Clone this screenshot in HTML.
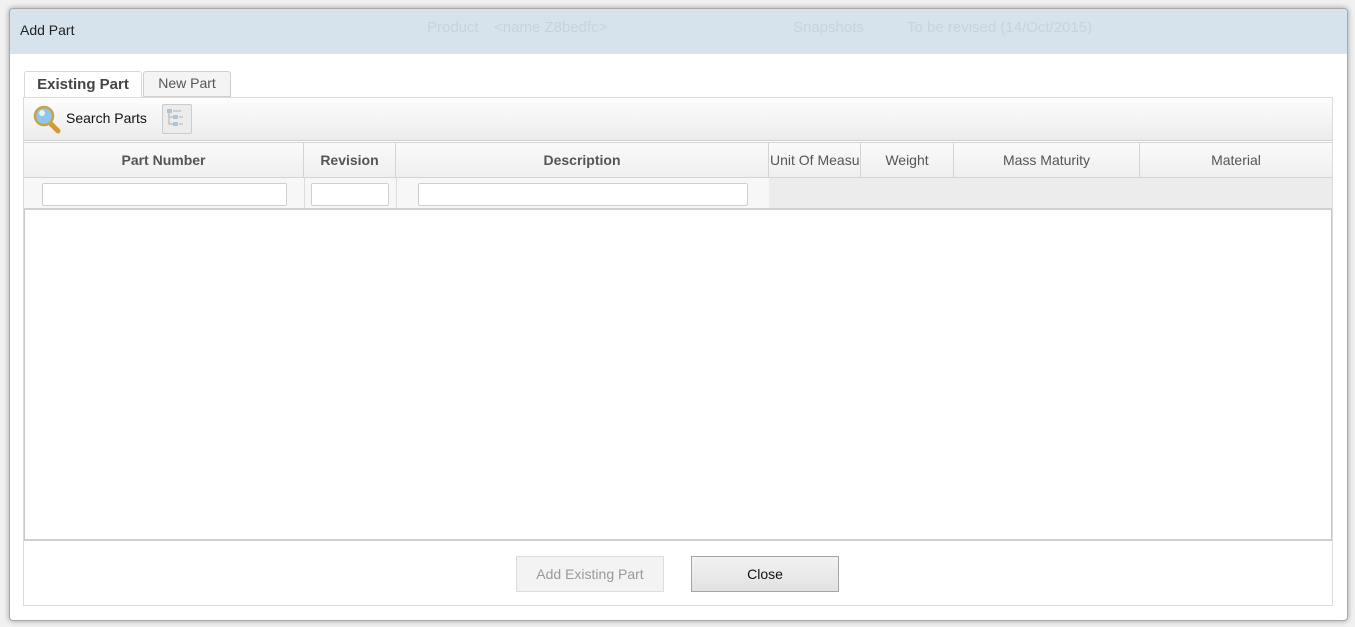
<!DOCTYPE html>
<html><head><style>
*{box-sizing:border-box;margin:0;padding:0}
body{width:1355px;height:627px;background:#e9e9e9;font-family:"Liberation Sans",sans-serif;position:relative;overflow:hidden}
.abs{position:absolute}
#dlg{left:9px;top:8px;width:1339px;height:613px;background:#fff;border:1px solid #a9a9a9;border-radius:4px;box-shadow:0 0 6px rgba(0,0,0,.35);overflow:hidden}
#hdr{left:0;top:0;width:100%;height:45px;background:#d6e3ec;}
.t{font-size:14px;color:#222}
.th{position:absolute;top:0;height:36px;line-height:35px;text-align:center;border-right:1px solid #d4d4d4;font-size:14px;color:#555}
.inp{position:absolute;top:5px;height:23px;background:#fff;border:1px solid #cfcfcf;border-radius:2px}
</style></head><body>
<div class="abs" style="left:0;top:0;width:1355px;height:627px;background:#f1f1f1"></div>
<div id="dlg" class="abs">
 <div id="hdr" class="abs">
  <div class="abs" style="left:417px;top:10px;font-size:15px;color:#c7d3dc">Product</div>
  <div class="abs" style="left:484px;top:10px;font-size:15px;color:#c7d3dc">&lt;name Z8bedfc&gt;</div>
  <div class="abs" style="left:783px;top:10px;font-size:15px;color:#c7d3dc">Snapshots</div>
  <div class="abs" style="left:897px;top:10px;font-size:15px;color:#c7d3dc">To be revised (14/Oct/2015)</div>
  <div class="abs t" style="left:10px;top:13px">Add Part</div>
 </div>
 <div class="abs" style="left:14px;top:62px;width:118px;height:28px;background:#fff;border:1px solid #d8d8d8;border-bottom:none;border-radius:3px 3px 0 0;font-size:15px;font-weight:bold;color:#444;text-align:center;line-height:25px">Existing Part</div>
 <div class="abs" style="left:133px;top:62px;width:88px;height:26px;background:#f4f4f4;border:1px solid #d0d0d0;border-radius:3px 3px 0 0;font-size:14px;color:#555;text-align:center;line-height:23px">New Part</div>
 <div class="abs" style="left:13px;top:88px;width:1310px;height:509px;border:1px solid #dcdcdc;background:#fff">
  <div class="abs" style="left:0;top:0;width:1308px;height:43px;background:linear-gradient(#fdfdfd,#ececec);border-bottom:1px solid #cfcfcf"></div>
  <svg class="abs" style="left:8px;top:6px" width="32" height="32" viewBox="0 0 32 32"><line x1="17" y1="18" x2="26" y2="27" stroke="#d09a3a" stroke-width="5" stroke-linecap="round"/><circle cx="12" cy="12" r="9" fill="#8fc6ea" stroke="#c9a24a" stroke-width="2.5"/><circle cx="10" cy="9" r="3" fill="#e4f3fc"/></svg>
  <div class="abs" style="left:42px;top:12px;font-size:14px;color:#111">Search Parts</div>
  <div class="abs" style="left:138px;top:6px;width:30px;height:30px;border:1px solid #ccc;border-radius:2px;background:#ececec">
   <svg width="28" height="28" viewBox="0 0 28 28"><rect x="4" y="4" width="5" height="4" fill="#a9c6dc"/><rect x="10" y="10" width="5" height="4" fill="#a9c6dc"/><rect x="10" y="17" width="5" height="4" fill="#a9c6dc"/><path d="M6 8v11h4M6 12h4M10 6h8M16 12h4M16 19h4" stroke="#b0b0b0" fill="none"/></svg>
  </div>
  <div class="abs" style="left:0;top:44px;width:1308px;height:36px;background:linear-gradient(#fafafa,#efefef);border-bottom:1px solid #d4d4d4;border-top:1px solid #d4d4d4">
   <div class="th" style="left:0;width:280px;font-weight:bold">Part Number</div>
   <div class="th" style="left:280px;width:92px;font-weight:bold">Revision</div>
   <div class="th" style="left:372px;width:373px;font-weight:bold">Description</div>
   <div class="th" style="left:745px;width:92px;overflow:hidden;white-space:nowrap;text-align:left;padding-left:1px">Unit Of Measure</div>
   <div class="th" style="left:837px;width:93px">Weight</div>
   <div class="th" style="left:930px;width:186px">Mass Maturity</div>
   <div class="th" style="left:1116px;width:192px;border-right:none">Material</div>
  </div>
  <div class="abs" style="left:0;top:80px;width:1308px;height:32px;background:#ececec;border-bottom:2px solid #d0d0d0">
   <div class="abs" style="left:0;top:0;width:745px;height:30px;background:#f7f7f7"></div>
   <div class="abs" style="left:280px;top:0;width:1px;height:30px;background:#ddd"></div>
   <div class="abs" style="left:372px;top:0;width:1px;height:30px;background:#ddd"></div>
   <div class="inp" style="left:18px;width:245px"></div>
   <div class="inp" style="left:287px;width:78px"></div>
   <div class="inp" style="left:394px;width:330px"></div>
  </div>
  <div class="abs" style="left:0;top:441px;width:1308px;height:2px;background:#d0d0d0"></div>
  <div class="abs" style="left:0;top:112px;width:1px;height:331px;background:#c8c8c8"></div>
  <div class="abs" style="left:1307px;top:112px;width:1px;height:331px;background:#c8c8c8"></div>
  <div class="abs" style="left:492px;top:458px;width:148px;height:36px;border:1px solid #ddd;background:#f3f3f3;color:#999;font-size:14px;text-align:center;line-height:34px">Add Existing Part</div>
  <div class="abs" style="left:667px;top:458px;width:148px;height:36px;border:1px solid #a5a5a5;background:linear-gradient(#f2f2f2,#e2e2e2);color:#111;font-size:14px;text-align:center;line-height:34px">Close</div>
 </div>
</div>
</body></html>
